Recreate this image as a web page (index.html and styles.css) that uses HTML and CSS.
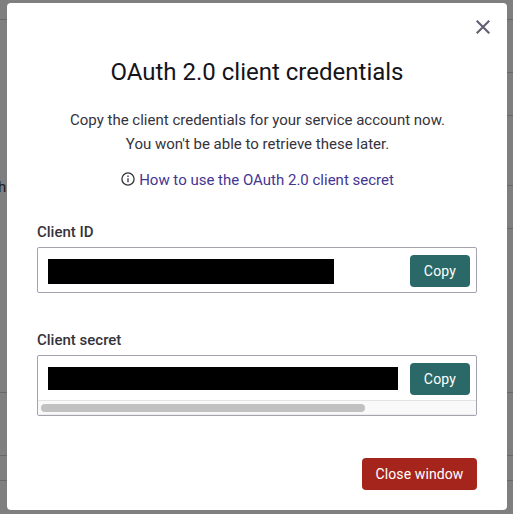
FILE: index.html
```html
<!DOCTYPE html>
<html lang="en">
<head>
<meta charset="utf-8">
<title>OAuth 2.0 client credentials</title>
<link rel="stylesheet" href="styles.css">
</head>
<body>
<div class="page">
  <div class="column">
    <div class="row r19"></div>
    <div class="row r373"><span>h</span></div>
    <div class="row r63"></div>
    <div class="row r25"></div>
    <div class="row r34"></div>
  </div>
  <div class="column">
    <div class="row r19"></div>
    <div class="row r53"></div>
    <div class="row r43"></div>
    <div class="row r70"></div>
    <div class="row r43"></div>
    <div class="row r164"></div>
    <div class="row r63"></div>
    <div class="row r25"></div>
    <div class="row r34"></div>
  </div>
</div>
<main class="modal" role="dialog">
  <button class="dismiss" aria-label="Close"><svg width="14" height="14" viewBox="0 0 14 14"><path d="M.7.7l12.6 12.6M13.3.7L.7 13.3" fill="none" stroke="#625f72" stroke-width="2.1"/></svg></button>
  <h1>OAuth 2.0 client credentials</h1>
  <p class="intro">Copy the client credentials for your service account now.<br>You won't be able to retrieve these later.</p>
  <p class="help"><svg width="14" height="14" viewBox="0 0 14 14"><circle cx="7" cy="7" r="6.1" fill="none" stroke="#35333c" stroke-width="1.3"/><path d="M7 6.2v4M7 3.6v1.4" fill="none" stroke="#35333c" stroke-width="1.3"/></svg><a>How to use the OAuth 2.0 client secret</a></p>
  <h2>Client ID</h2>
  <div class="field">
    <div class="value"><div class="mask id"></div><button class="btn">Copy</button></div>
  </div>
  <h2 class="second">Client secret</h2>
  <div class="field">
    <div class="value"><div class="mask secret"></div><button class="btn">Copy</button></div>
    <div class="scroll"><div class="thumb"></div></div>
  </div>
  <footer><button class="btn danger">Close window</button></footer>
</main>
</body>
</html>
```

FILE: styles.css
```css
* { box-sizing: border-box; }
body {
  margin: 0;
  height: 514px;
  overflow: hidden;
  background: #7f7f7f;
  color: #35333c;
  font: 15px/24px Roboto, sans-serif;
}
.page {
  position: absolute;
  inset: 0;
  display: flex;
  justify-content: space-between;
}
.column { width: 50%; }
.row { border-top: 1px solid transparent; }
.row + .row { border-color: #68676d; }
.r19 { height: 19px; }
.r25 { height: 25px; }
.r34 { height: 34px; }
.r43 { height: 43px; }
.r53 { height: 53px; }
.r63 { height: 63px; }
.r70 { height: 70px; }
.r164 { height: 164px; }
.r373 { height: 373px; padding-top: 155px; }
.row span { margin-left: -2px; color: #1b1a1e; }
.modal {
  position: relative;
  width: 500px;
  height: 507px;
  margin: 3px 0 0 7px;
  padding: 17px 30px 0;
  border-radius: 4px;
  background: #fff;
}
button { border: 0; padding: 0; font: inherit; }
svg { display: block; }
.dismiss {
  display: block;
  margin: 0 -13px 0 auto;
  background: none;
}
h1 {
  margin: 22px 0 0;
  color: #15141a;
  font-size: 24px;
  font-weight: 400;
  line-height: 32px;
  text-align: center;
}
.intro { margin: 20px 0 0; padding-left: 1px; text-align: center; }
.help {
  display: flex;
  justify-content: center;
  align-items: center;
  gap: 4px;
  margin: 12px 0 0;
  padding-left: 1px;
}
.help svg { position: relative; top: -1px; }
.help a { color: #443592; }
h2 {
  margin: 28px 0 0;
  font-size: 15px;
  font-weight: 500;
  line-height: 24px;
}
.second { margin-top: 35px; }
.field {
  margin-top: 3px;
  border: 1px solid #a5a3af;
  border-radius: 2px;
}
.value {
  display: flex;
  justify-content: space-between;
  align-items: flex-start;
  height: 44px;
  padding: 7px 6px 0 10px;
}
.mask { margin-top: 4px; background: #000; }
.id { width: 286px; height: 25px; }
.secret { width: 350px; height: 23px; }
.btn {
  width: 60px;
  height: 32px;
  border-radius: 4px;
  background: #2a6967;
  color: #fff;
  font-size: 14px;
  letter-spacing: .2px;
}
.scroll {
  height: 15px;
  padding: 3px;
  border-top: 1px solid #e3e3e3;
  border-bottom: 1px solid #ededed;
  background: #f9f9f9;
}
.thumb {
  width: 324px;
  height: 8px;
  border-radius: 4px;
  background: #c1c1c1;
}
footer { display: flex; justify-content: flex-end; margin-top: 42px; }
.danger { width: 115px; background: #a5251c; letter-spacing: .1px; }
```
